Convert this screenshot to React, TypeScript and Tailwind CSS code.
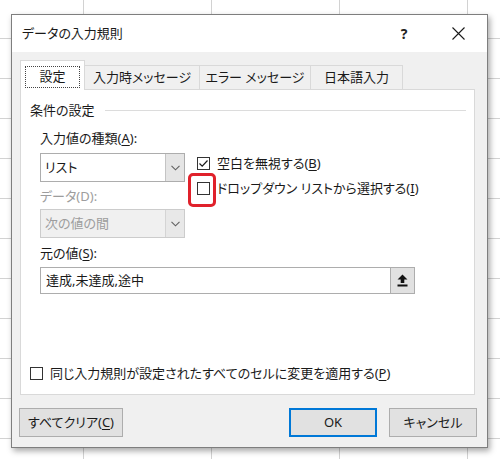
import React from "react";

const font = "font-['Noto_Sans','Noto_Sans_CJK_JP',sans-serif] [font-feature-settings:'palt']";

function Chevron() {
  return (
    <svg width="9" height="6" viewBox="0 0 9 6" fill="none">
      <polyline points="0.5,0.8 4.5,4.8 8.5,0.8" stroke="#606060" strokeWidth="1.1" />
    </svg>
  );
}

function Combo({ value, disabled }: { value: string; disabled?: boolean }) {
  return (
    <div
      className={`flex h-[29px] w-[145px] border ${
        disabled ? "border-[#cccccc] bg-[#f0f0f0] text-[#9d9d9d]" : "border-[#adadad] bg-white text-[#1a1a1a]"
      }`}
    >
      <div className="flex flex-1 items-center pl-[4px] text-[13px] leading-none">{value}</div>
      <div
        className={`flex w-[19px] items-center justify-center border-l ${
          disabled ? "border-[#d4d4d4] bg-[#e8e8e8]" : "border-[#c4c4c4] bg-[#e5e5e5]"
        }`}
      >
        <Chevron />
      </div>
    </div>
  );
}

function Box({ checked }: { checked?: boolean }) {
  return (
    <div className="flex h-[13px] w-[13px] shrink-0 items-center justify-center border border-[#333333] bg-white">
      {checked && (
        <svg width="11" height="11" viewBox="0 0 11 11" fill="none">
          <polyline points="1.5,5.5 4.2,8.2 9.5,2.5" stroke="#1a1a1a" strokeWidth="1.2" />
        </svg>
      )}
    </div>
  );
}

function Key({ k }: { k: string }) {
  return <span className="underline underline-offset-2">{k}</span>;
}

export default function App() {
  return (
    <div
      className={`${font} h-[459px] w-[500px] overflow-hidden bg-white pl-[11px] pt-[14px] text-[#1a1a1a] [background-image:linear-gradient(to_right,#d2d2d2_1px,transparent_1px),linear-gradient(to_bottom,#d2d2d2_1px,transparent_1px)] [background-position:83px_38px] [background-size:128px_40px]`}
    >
      <div className="flex h-[434px] w-[477px] flex-col border border-[#7e7e7e] bg-[#f0f0f0] shadow-[2px_3px_6px_rgba(0,0,0,0.35)]">
        {/* title bar */}
        <div className="flex h-[37px] shrink-0 items-center bg-white pl-[10px] pr-[6px]">
          <span className="text-[13px] leading-none text-[#1a1a1a]">データの入力規則</span>
          <div className="ml-auto flex items-center">
            <span className="w-[28px] text-center text-[14px] font-bold leading-none text-[#222]">?</span>
            <div className="w-[17px]" />
            <div className="flex w-[46px] items-center justify-center">
              <svg width="13" height="13" viewBox="0 0 13 13">
                <path d="M0.5 0.5 L12.5 12.5 M12.5 0.5 L0.5 12.5" stroke="#1a1a1a" strokeWidth="1.1" />
              </svg>
            </div>
          </div>
        </div>

        {/* body */}
        <div className="flex flex-1 flex-col px-[8px] pt-[8px]">
          {/* tabs */}
          <div className="relative z-10 -mb-px flex h-[30px] items-end text-[13px] leading-none">
            <div className="flex h-[30px] w-[65px] items-center justify-center border border-b-0 border-[#d9d9d9] bg-white pt-[2px]">
              <div className="flex h-[22px] w-[55px] items-center justify-center border border-dotted border-[#444]">
                設定
              </div>
            </div>
            <div className="flex h-[25px] w-[115px] items-center justify-center border border-l-0 border-[#d9d9d9] bg-[#f0f0f0]">
              入力時メッセージ
            </div>
            <div className="flex h-[25px] w-[111px] items-center justify-center border border-l-0 border-[#d9d9d9] bg-[#f0f0f0]">
              エラー メッセージ
            </div>
            <div className="flex h-[25px] w-[92px] items-center justify-center border border-l-0 border-[#d9d9d9] bg-[#f0f0f0]">
              日本語入力
            </div>
          </div>

          {/* tab panel */}
          <div className="flex h-[306px] w-[455px] flex-col border border-[#d9d9d9] bg-white text-[13px] leading-none">
            <div className="mt-[12px] flex h-[17px] items-center pl-[9px] pr-[8px]">
              <span>条件の設定</span>
              <div className="ml-[10px] h-px flex-1 bg-[#dcdcdc]" />
            </div>

            <div className="flex flex-col pl-[19px]">
              <div className="mt-[11px] flex h-[17px] items-center">
                入力値の種類(<Key k="A" />):
              </div>

              <div className="mt-[6px] flex">
                <div className="flex w-[145px] flex-col">
                  <Combo value="リスト" />
                  <div className="mt-[6px] flex h-[17px] items-center text-[#9d9d9d]">データ(D):</div>
                  <div className="mt-[4px]">
                    <Combo value="次の値の間" disabled />
                  </div>
                </div>

                <div className="ml-[12px] flex flex-col pt-[4px]">
                  <div className="flex h-[13px] items-center gap-[7px]">
                    <Box checked />
                    <span>
                      空白を無視する(<Key k="B" />)
                    </span>
                  </div>
                  <div className="mt-[12px] flex h-[13px] items-center gap-[7px]">
                    <div className="relative">
                      <Box />
                      <div className="absolute left-[-9px] top-[-9px] h-[34px] w-[28px] rounded-[5px] border-[3px] border-[#e0212b]" />
                    </div>
                    <span>
                      ドロップダウン リストから選択する(<Key k="I" />)
                    </span>
                  </div>
                </div>
              </div>

              <div className="mt-[7px] flex h-[17px] items-center">
                元の値(<Key k="S" />):
              </div>
              <div className="mt-[5px] flex h-[27px] w-[375px] border border-[#adadad] bg-white">
                <div className="flex flex-1 items-center pl-[5px]">達成,未達成,途中</div>
                <div className="flex w-[24px] items-center justify-center border-l border-[#adadad] bg-[#e1e1e1]">
                  <svg width="11" height="13" viewBox="0 0 11 13">
                    <path d="M5.5 0.5 L10.5 5.5 H7.3 V9 H3.7 V5.5 H0.5 Z" fill="#111" />
                    <rect x="0.5" y="10.5" width="10" height="2" fill="#111" />
                  </svg>
                </div>
              </div>
            </div>

            <div className="flex-1" />
            <div className="mb-[12px] flex h-[17px] items-center gap-[7px] pl-[9px]">
              <Box />
              <span>
                同じ入力規則が設定されたすべてのセルに変更を適用する(<Key k="P" />)
              </span>
            </div>
          </div>

          {/* buttons */}
          <div className="mt-[13px] flex text-[13px] leading-none">
            <div className="-ml-px flex h-[29px] w-[104px] items-center justify-center border border-[#adadad] bg-[#e1e1e1]">
              すべてクリア(<Key k="C" />)
            </div>
            <div className="ml-auto flex h-[29px] w-[88px] items-center justify-center border-2 border-[#0078d7] bg-[#e1e1e1]">
              OK
            </div>
            <div className="ml-[12px] mr-[2px] flex h-[29px] w-[88px] items-center justify-center border border-[#adadad] bg-[#e1e1e1]">
              キャンセル
            </div>
          </div>
        </div>
      </div>
    </div>
  );
}
